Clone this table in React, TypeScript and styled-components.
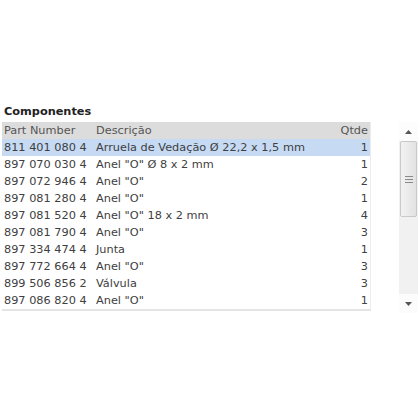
import React from 'react';
import styled, { createGlobalStyle } from 'styled-components';

const GlobalStyle = createGlobalStyle`
  body {
    margin: 0;
    background: #ffffff;
    font-family: "DejaVu Sans", Verdana, sans-serif;
  }
`;

type Part = { code: string; desc: string; qty: number };

const parts: Part[] = [
  { code: '811 401 080 4', desc: 'Arruela de Vedação Ø 22,2 x 1,5 mm', qty: 1 },
  { code: '897 070 030 4', desc: 'Anel "O" Ø 8 x 2 mm', qty: 1 },
  { code: '897 072 946 4', desc: 'Anel "O"', qty: 2 },
  { code: '897 081 280 4', desc: 'Anel "O"', qty: 1 },
  { code: '897 081 520 4', desc: 'Anel "O" 18 x 2 mm', qty: 4 },
  { code: '897 081 790 4', desc: 'Anel "O"', qty: 3 },
  { code: '897 334 474 4', desc: 'Junta', qty: 1 },
  { code: '897 772 664 4', desc: 'Anel "O"', qty: 3 },
  { code: '899 506 856 2', desc: 'Válvula', qty: 3 },
  { code: '897 086 820 4', desc: 'Anel "O"', qty: 1 },
];

const App = () => {
  return (
    <>
      <GlobalStyle />
      <S.Page>
        <S.Title>Componentes</S.Title>
        <S.Panel>
          <S.Table>
            <S.HeadRow>
              <S.Cell>Part Number</S.Cell>
              <S.Cell>Descrição</S.Cell>
              <S.NumCell>Qtde</S.NumCell>
            </S.HeadRow>
            {parts.map((p, i) => (
              <S.Row key={p.code} selected={i === 0}>
                <S.Cell>{p.code}</S.Cell>
                <S.Cell>{p.desc}</S.Cell>
                <S.NumCell>{p.qty}</S.NumCell>
              </S.Row>
            ))}
          </S.Table>
          <S.Scrollbar>
            <S.Arrow>
              <svg width="7" height="4" viewBox="0 0 7 4">
                <path d="M3.5 0 L7 4 L0 4 Z" fill="#555" />
              </svg>
            </S.Arrow>
            <S.Track>
              <S.Thumb>
                <S.Grip />
                <S.Grip />
                <S.Grip />
              </S.Thumb>
            </S.Track>
            <S.Arrow>
              <svg width="7" height="4" viewBox="0 0 7 4">
                <path d="M0 0 L7 0 L3.5 4 Z" fill="#555" />
              </svg>
            </S.Arrow>
          </S.Scrollbar>
        </S.Panel>
      </S.Page>
    </>
  );
};

const S = {
  Page: styled.div`
    padding: 104px 0 0 2px;
    width: 420px;
    box-sizing: border-box;
  `,
  Title: styled.div`
    font-weight: bold;
    font-size: 11.3px;
    color: #222;
    height: 18px;
    line-height: 16px;
    padding-left: 2px;
  `,
  Panel: styled.div`
    display: flex;
    align-items: flex-start;
    gap: 28px;
  `,
  Table: styled.div`
    width: 368px;
    border-bottom: 2px solid #e4e4e4;
    border-right: 1px solid #ececec;
  `,
  HeadRow: styled.div`
    display: grid;
    grid-template-columns: 92px 1fr 40px;
    height: 17px;
    background: #dcdcdc;
    color: #555;
    font-size: 11.3px;
    line-height: 17px;
  `,
  Row: styled.div<{ selected?: boolean }>`
    display: grid;
    grid-template-columns: 92px 1fr 40px;
    height: 17px;
    background: ${p => (p.selected ? '#c6daf4' : '#ffffff')};
    color: #404040;
    font-size: 11.3px;
    line-height: 17px;
  `,
  Cell: styled.div`
    padding-left: 2px;
    white-space: nowrap;
    overflow: hidden;
  `,
  NumCell: styled.div`
    text-align: right;
    padding-right: 2px;
  `,
  Scrollbar: styled.div`
    width: 19px;
    height: 191px;
    display: flex;
    flex-direction: column;
    background: #f6f6f6;
  `,
  Arrow: styled.div`
    height: 19px;
    display: flex;
    align-items: center;
    justify-content: center;
    background: #fcfcfc;
  `,
  Track: styled.div`
    flex: 1;
    padding: 0 1px;
    background: #f1f1f1;
  `,
  Thumb: styled.div`
    height: 76px;
    border: 1px solid #c9c9c9;
    border-radius: 2px;
    background: linear-gradient(to right, #f2f2f2, #e2e2e2);
    display: flex;
    flex-direction: column;
    align-items: center;
    justify-content: center;
    gap: 2px;
    box-sizing: border-box;
  `,
  Grip: styled.div`
    width: 8px;
    height: 1px;
    background: #8a8a8a;
  `,
};

export default App;
